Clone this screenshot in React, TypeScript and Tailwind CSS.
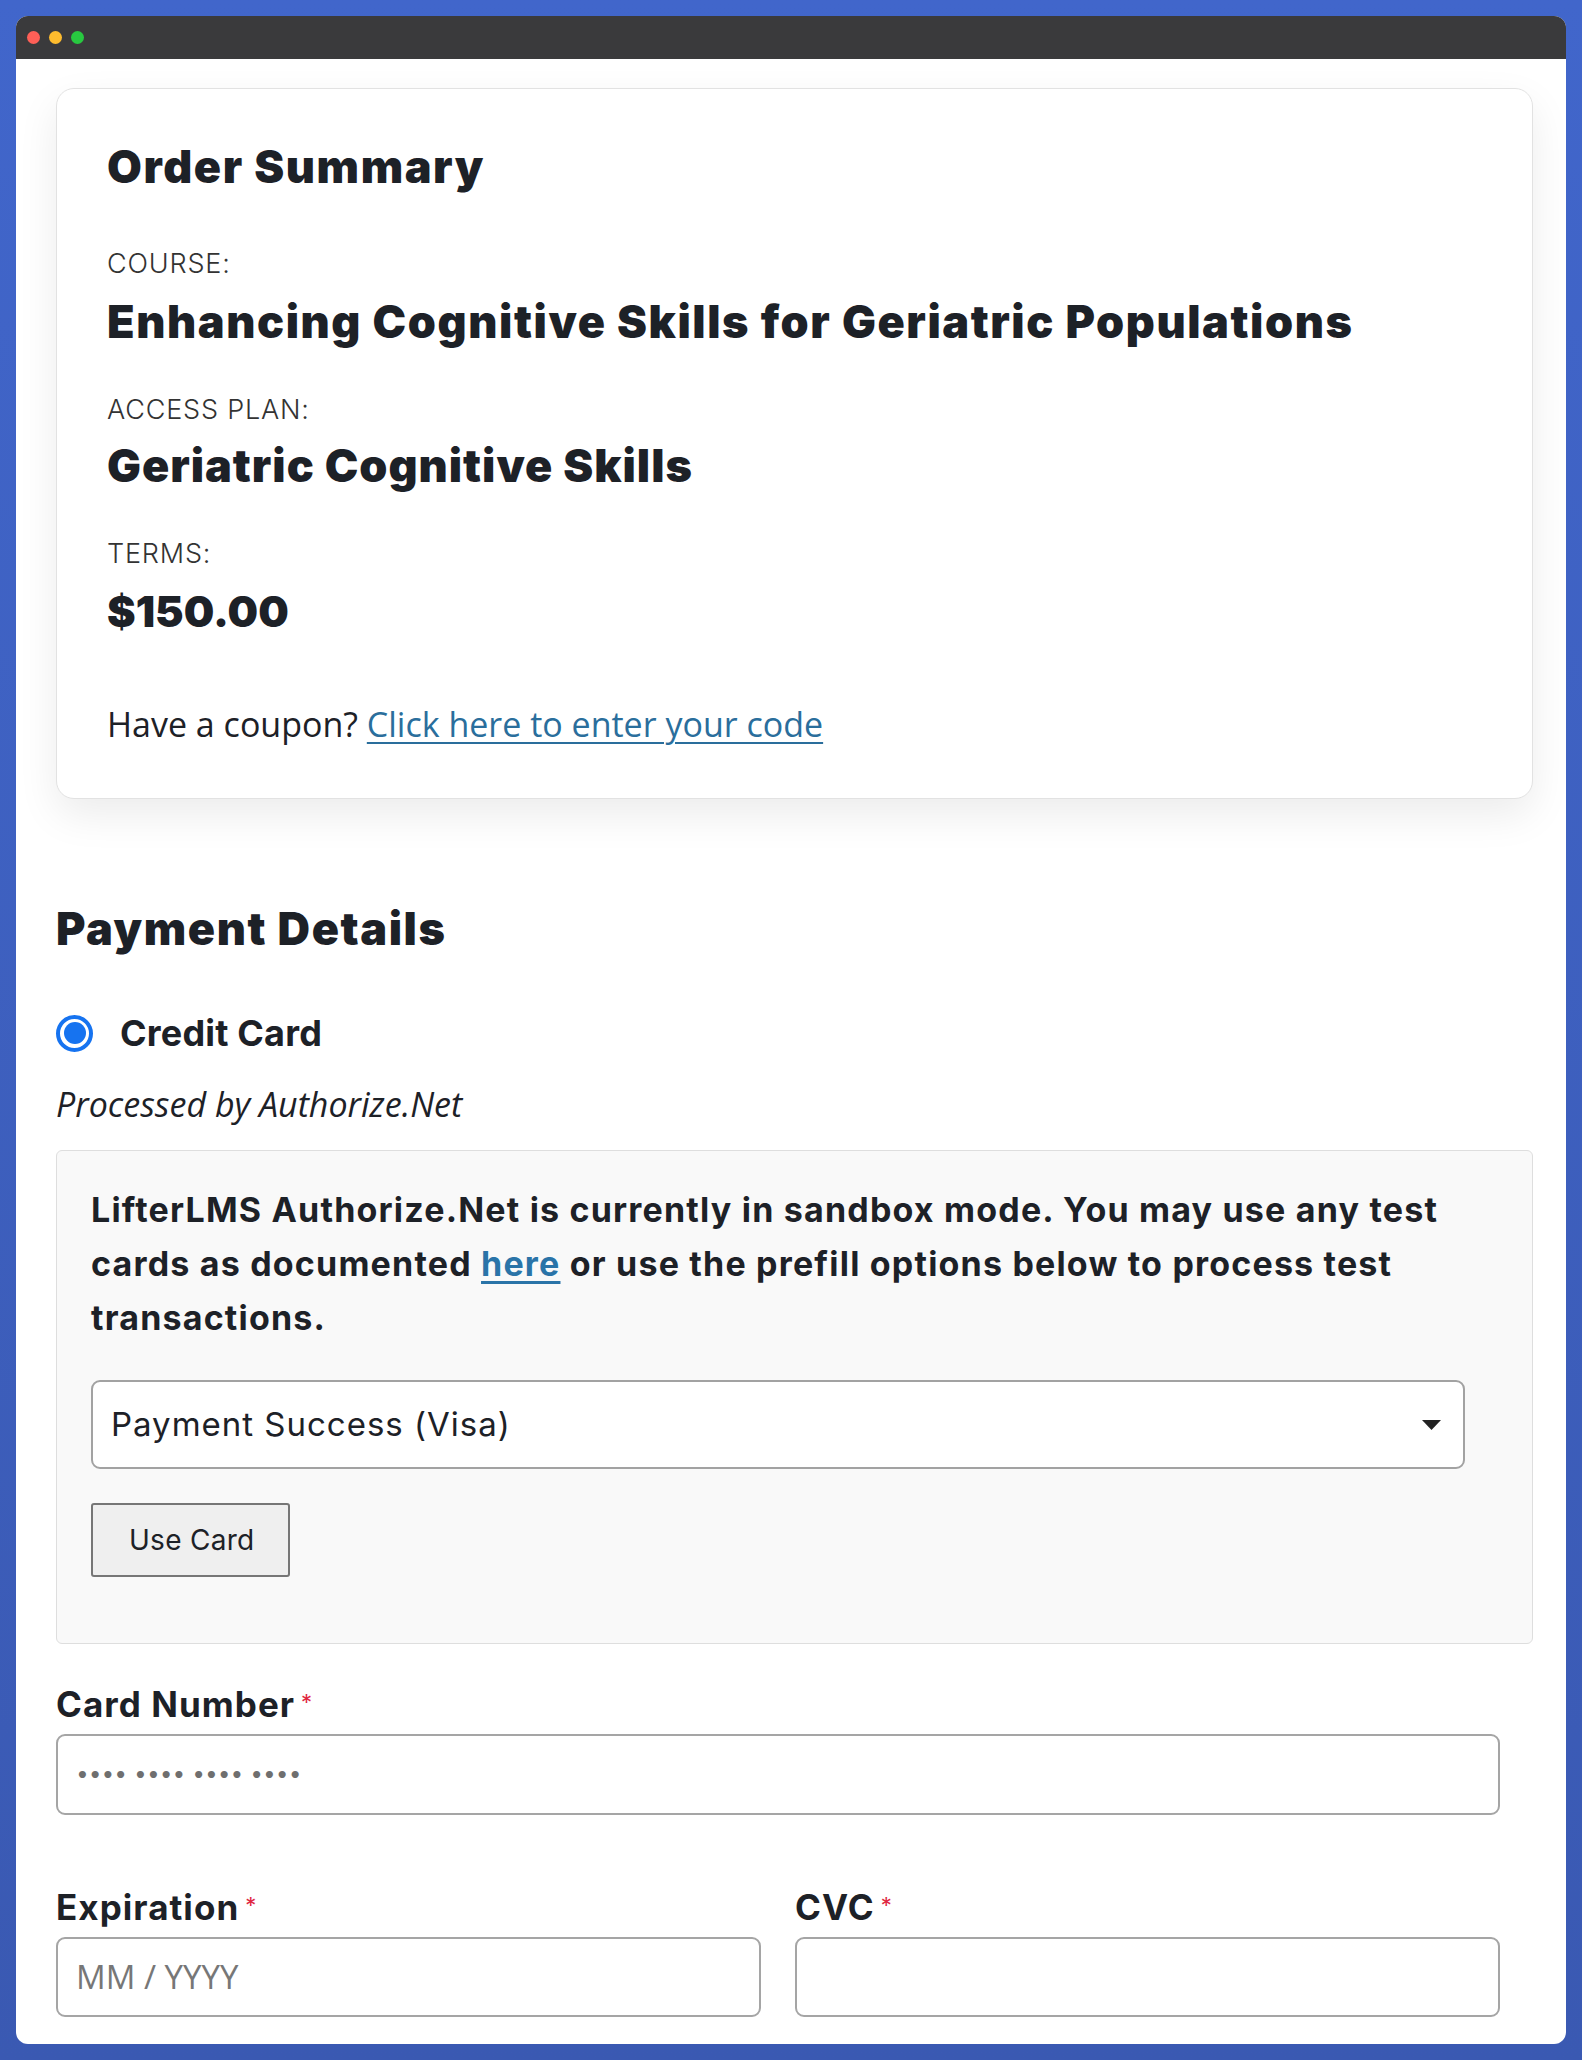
export default function App() {
  const heading = "font-['Inter',sans-serif] font-black text-[#1d2127] text-[45px] tracking-[0.035em]";
  const label = "font-['Inter',sans-serif] font-light text-[#333] uppercase text-[27px] leading-[32px] tracking-[0.03em]";
  const fieldLabel = "font-['Inter',sans-serif] text-[35px] font-bold tracking-[0.03em] text-[#1d2127]";
  return (
    <div className="min-h-[2060px] w-full bg-gradient-to-b from-[#4166cb] to-[#3a59b2] p-4">
      <div className="h-[2028px] overflow-hidden rounded-[12px] bg-white">
        <div className="flex h-[43px] items-center gap-[9px] bg-[#3a3a3c] pl-[11px]">
          <span className="h-[13px] w-[13px] rounded-full bg-[#fe5f57]" />
          <span className="h-[13px] w-[13px] rounded-full bg-[#febc2e]" />
          <span className="h-[13px] w-[13px] rounded-full bg-[#28c840]" />
        </div>
        <div className="pl-[40px] pr-[33px] pt-[29px]">
          {/* Order Summary card */}
          <div className="rounded-[18px] border border-[#e2e2e2] bg-white pl-[50px] pr-[40px] pt-[50px] pb-[54px] shadow-[0_16px_40px_rgba(0,0,0,0.08)]">
            <h2 className={`${heading} leading-[56px]`}>Order Summary</h2>
            <div className={`${label} mt-[53px]`}>Course:</div>
            <div className={`${heading} mt-[16px] leading-[52px]`}>
              Enhancing Cognitive Skills for Geriatric Populations
            </div>
            <div className={`${label} mt-[46px]`}>Access Plan:</div>
            <div className="mt-[14px] font-['Inter',sans-serif] text-[45px] font-black leading-[52px] tracking-[0.022em] text-[#1d2127]">
              Geriatric Cognitive Skills
            </div>
            <div className={`${label} mt-[46px]`}>Terms:</div>
            <div className="mt-[15px] font-['Inter',sans-serif] text-[43px] font-black leading-[52px] text-[#1d2127]">$150.00</div>
            <div className="mt-[67px] font-['Open_Sans',sans-serif] text-[34px] leading-[40px] text-[#1d2127]">
              Have a coupon?{" "}
              <a href="#" className="text-[#2a6e9c] underline decoration-[2px] underline-offset-[5px]">
                Click here to enter your code
              </a>
            </div>
          </div>

          {/* Payment Details */}
          <h2 className={`${heading} mt-[102px] leading-[56px]`}>Payment Details</h2>
          <div className="mt-[56px] flex h-[40px] items-center">
            <span className="flex h-[37px] w-[37px] items-center justify-center rounded-full border-[4px] border-[#1673f0] bg-white">
              <span className="h-[22px] w-[22px] rounded-full bg-[#1673f0]" />
            </span>
            <span className="ml-[27px] font-['Inter',sans-serif] text-[36px] font-bold tracking-[0.005em] text-[#1d2127]">
              Credit Card
            </span>
          </div>
          <div className="mt-[31px] font-['Open_Sans',sans-serif] text-[34px] italic leading-[40px] text-[#1d2127]">
            Processed by Authorize.Net
          </div>

          {/* Sandbox box */}
          <div className="mt-[26px] rounded-[6px] border border-[#dedede] bg-[#f9f9f9] pl-[34px] pr-[30px] pt-[32px] pb-[66px]">
            <p className="whitespace-nowrap font-['Inter',sans-serif] text-[34px] font-bold leading-[54px] tracking-[0.035em] text-[#1d2127]">
              LifterLMS Authorize.Net is currently in sandbox mode. You may use any test
              <br />
              cards as documented{" "}
              <a href="#" className="text-[#2a74a8] underline decoration-[3px] underline-offset-[5px]">
                here
              </a>{" "}
              or use the prefill options below to process test
              <br />
              transactions.
            </p>
            <div className="mt-[35px] flex h-[89px] w-[1374px] items-center justify-between rounded-[9px] border-2 border-[#a2a2a2] bg-white pl-[18px] pr-[22px]">
              <span className="font-['Inter',sans-serif] text-[33px] font-normal tracking-[0.03em] text-[#1d2127]">
                Payment Success (Visa)
              </span>
              <svg width="19" height="10" viewBox="0 0 19 10" aria-hidden="true">
                <polygon points="0,0 19,0 9.5,10" fill="#222" />
              </svg>
            </div>
            <button
              type="button"
              className="mt-[34px] flex h-[74px] w-[199px] items-center rounded-[3px] border-2 border-[#767676] bg-[#efefef] pl-[36px] font-['Inter',sans-serif] text-[28px] tracking-[0.01em] text-[#1d2127]"
            >
              Use Card
            </button>
          </div>

          {/* Card Number */}
          <div className="mt-[40px] flex h-[40px] items-center">
            <span className={fieldLabel}>Card Number</span>
            <span className="ml-[6px] self-start pt-[2px] font-['Inter',sans-serif] text-[22px] text-[#e0263f]">*</span>
          </div>
          <div className="mt-[10px] flex h-[81px] w-[1444px] items-center rounded-[9px] border-2 border-[#a5a5a5] bg-white pl-[18px]">
            <span className="font-['DejaVu_Sans',sans-serif] text-[20px] font-bold text-[#6f6f6f]">•••• •••• •••• ••••</span>
          </div>

          {/* Expiration / CVC */}
          <div className="mt-[72px] grid w-[1444px] grid-cols-2 gap-[34px]">
            <div>
              <div className="flex h-[40px] items-center">
                <span className={fieldLabel}>Expiration</span>
                <span className="ml-[6px] self-start pt-[2px] font-['Inter',sans-serif] text-[22px] text-[#e0263f]">*</span>
              </div>
              <div className="mt-[10px] flex h-[80px] items-center rounded-[9px] border-2 border-[#a5a5a5] bg-white pl-[18px]">
                <span className="font-['Open_Sans',sans-serif] text-[33px] text-[#777]">MM / YYYY</span>
              </div>
            </div>
            <div>
              <div className="flex h-[40px] items-center">
                <span className={fieldLabel}>CVC</span>
                <span className="ml-[6px] self-start pt-[2px] font-['Inter',sans-serif] text-[22px] text-[#e0263f]">*</span>
              </div>
              <div className="mt-[10px] h-[80px] rounded-[9px] border-2 border-[#a5a5a5] bg-white" />
            </div>
          </div>
        </div>
      </div>
    </div>
  );
}
